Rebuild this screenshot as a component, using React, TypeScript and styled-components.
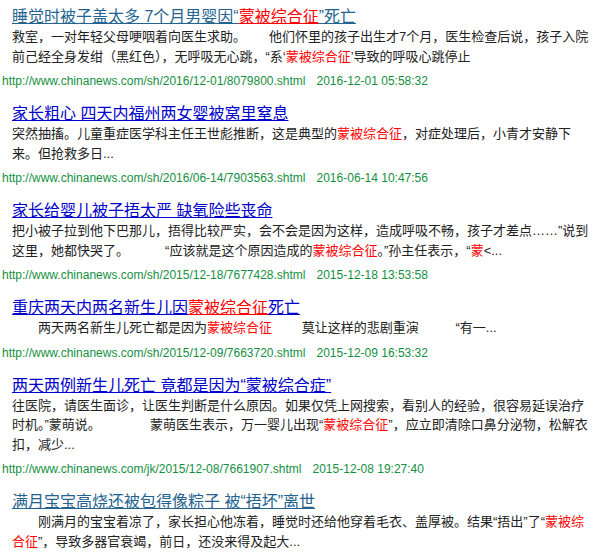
import React from 'react';
import styled, { createGlobalStyle } from 'styled-components';

const GlobalStyle = createGlobalStyle`
    body {
        margin: 0;
        background: #fff;
    }
`

const Page = styled.div`
    padding: 7px 10px 0 0;
    font-family: "Liberation Sans", "Noto Sans CJK SC", sans-serif;
`

const Result = styled.div`
    margin-bottom: 14px;
`

const Title = styled.h3`
    margin: 0;
    padding-left: 12px;
    font-size: 16px;
    line-height: 20px;
    font-weight: normal;
`

const Link = styled.a<{ $visited?: boolean }>`
    color: ${p => (p.$visited ? '#24638f' : '#0000cc')};
    text-decoration: underline;
`

const Hl = styled.span`
    color: #ff0000;
    text-decoration: inherit;
`

const Abstract = styled.p`
    margin: 0;
    padding-left: 12px;
    font-size: 13px;
    line-height: 19.5px;
    color: #222;
`

const Url = styled.div`
    margin-top: 6px;
    padding-left: 2px;
    font-family: "Liberation Sans", Arial, sans-serif;
    font-size: 12px;
    line-height: 18px;
    color: #13903f;

    span {
        margin-left: 11px;
    }
`

type Part = string | { hl: string }

interface Item {
    title: Part[]
    visited?: boolean
    body: Part[]
    url?: string
    date?: string
}

// runs of blank space the source text has between its paragraphs
const sp = (wide: number, narrow = 1) => '\u3000'.repeat(wide) + '\u00a0'.repeat(narrow)

const items: Item[] = [
    {
        visited: true,
        title: ['睡觉时被子盖太多 7个月男婴因“', { hl: '蒙被综合征' }, '”死亡'],
        body: [
            '救室，一对年轻父母哽咽着向医生求助。' + sp(2) + '他们怀里的孩子出生才7个月，医生检查后说，孩子入院前己经全身发绀（黑红色），无呼吸无心跳，“系‘',
            { hl: '蒙被综合征' },
            '’导致的呼吸心跳停止',
        ],
        url: 'http://www.chinanews.com/sh/2016/12-01/8079800.shtml',
        date: '2016-12-01 05:58:32',
    },
    {
        title: ['家长粗心 四天内福州两女婴被窝里窒息'],
        body: ['突然抽搐。儿童重症医学科主任王世彪推断，这是典型的', { hl: '蒙被综合征' }, '，对症处理后，小青才安静下来。但抢救多日...'],
        url: 'http://www.chinanews.com/sh/2016/06-14/7903563.shtml',
        date: '2016-06-14 10:47:56',
    },
    {
        title: ['家长给婴儿被子捂太严 缺氧险些丧命'],
        body: [
            '把小被子拉到他下巴那儿，捂得比较严实，会不会是因为这样，造成呼吸不畅，孩子才差点……”说到这里，她都快哭了。' + sp(3) + '“应该就是这个原因造成的',
            { hl: '蒙被综合征' },
            '。”孙主任表示，“',
            { hl: '蒙' },
            '<...',
        ],
        url: 'http://www.chinanews.com/sh/2015/12-18/7677428.shtml',
        date: '2015-12-18 13:53:58',
    },
    {
        title: ['重庆两天内两名新生儿因', { hl: '蒙被综合征' }, '死亡'],
        body: ['\u3000\u3000两天两名新生儿死亡都是因为', { hl: '蒙被综合征' }, sp(2) + '莫让这样的悲剧重演' + sp(2, 3) + '“有一...'],
        url: 'http://www.chinanews.com/sh/2015/12-09/7663720.shtml',
        date: '2015-12-09 16:53:32',
    },
    {
        title: ['两天两例新生儿死亡 竟都是因为“蒙被综合症”'],
        body: [
            '往医院，请医生面诊，让医生判断是什么原因。如果仅凭上网搜索，看别人的经验，很容易延误治疗时机。”蒙萌说。' + sp(4) + '蒙萌医生表示，万一婴儿出现“',
            { hl: '蒙被综合征' },
            '”，应立即清除口鼻分泌物，松解衣扣，减少...',
        ],
        url: 'http://www.chinanews.com/jk/2015/12-08/7661907.shtml',
        date: '2015-12-08 19:27:40',
    },
    {
        visited: true,
        title: ['满月宝宝高烧还被包得像粽子 被“捂坏”离世'],
        body: [
            '\u3000\u3000刚满月的宝宝着凉了，家长担心他冻着，睡觉时还给他穿着毛衣、盖厚被。结果“捂出”了“',
            { hl: '蒙被综合征' },
            '”，导致多器官衰竭，前日，还没来得及起大...',
        ],
    },
]

const renderParts = (parts: Part[]) =>
    parts.map((p, i) => (typeof p === 'string' ? <React.Fragment key={i}>{p}</React.Fragment> : <Hl key={i}>{p.hl}</Hl>))

const App = () => {
    return (
        <Page>
            <GlobalStyle />
            {items.map((item, i) => (
                <Result key={i}>
                    <Title>
                        <Link href='#' $visited={item.visited}>{renderParts(item.title)}</Link>
                    </Title>
                    <Abstract>{renderParts(item.body)}</Abstract>
                    {item.url && (
                        <Url>
                            {item.url}
                            <span>{item.date}</span>
                        </Url>
                    )}
                </Result>
            ))}
        </Page>
    )
}

export default App;
